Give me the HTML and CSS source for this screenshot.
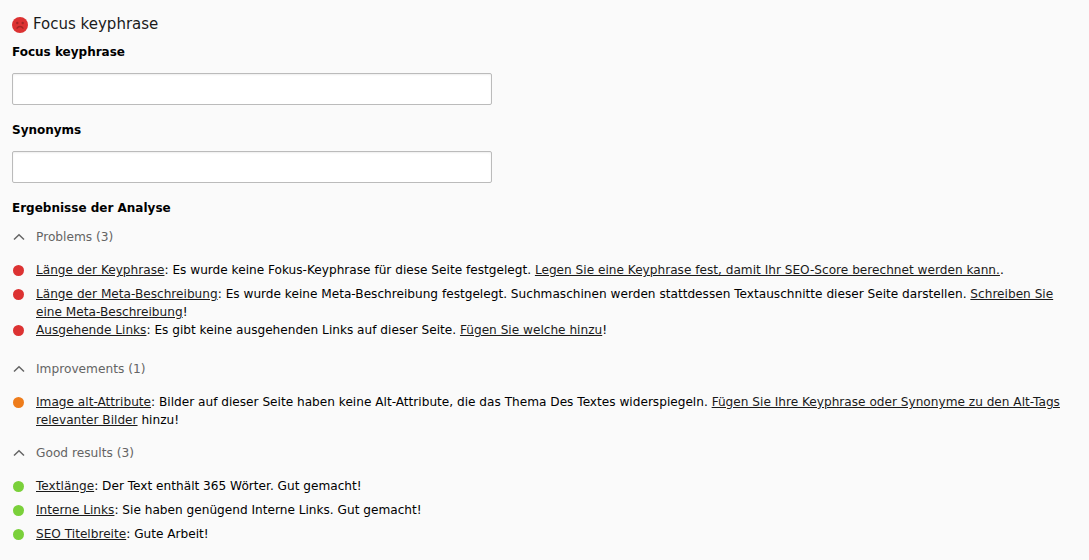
FILE: index.html
```html
<!DOCTYPE html>
<html lang="en">
<head>
  <meta charset="UTF-8">
  <title>Focus keyphrase</title>
  <link rel="stylesheet" href="styles.css">
</head>
<body>

<div class="container">
  <h2 class="title">
    <svg class="smiley" width="16" height="16" viewBox="0 0 16 16">
      <circle cx="8" cy="8" r="8" fill="#dc3232"/>
      <circle cx="5.300" cy="6" r="1.200" fill="#a52525"/>
      <circle cx="10.700" cy="6" r="1.200" fill="#a52525"/>
      <path d="M4.600 11.600c1-1.500 2.100-2.100 3.400-2.100s2.400.6 3.400 2.100" fill="none" stroke="#a52525" stroke-width="1.300"/>
    </svg>
    Focus keyphrase
  </h2>

  <label class="field-label" for="keyphrase">Focus keyphrase</label>
  <input class="field-input" type="text" id="keyphrase">

  <label class="field-label" for="synonyms">Synonyms</label>
  <input class="field-input" type="text" id="synonyms">

  <h3 class="results-title">Ergebnisse der Analyse</h3>

  <div class="section-head">
    <svg class="chevron" width="13" height="8" viewBox="0 0 13 8"><path d="M2 6.500 7 1.800l5 4.700" fill="none" stroke="#646464" stroke-width="1.500"/></svg>
    Problems (3)
  </div>
  <ul class="results">
    <li><span class="dot red"></span><p><a href="#">Länge der Keyphrase</a>: Es wurde keine Fokus-Keyphrase für diese Seite festgelegt. <a href="#">Legen Sie eine Keyphrase fest, damit Ihr SEO-Score berechnet werden kann.</a>.</p></li>
    <li><span class="dot red"></span><p><a href="#">Länge der Meta-Beschreibung</a>: Es wurde keine Meta-Beschreibung festgelegt. Suchmaschinen werden stattdessen Textauschnitte dieser Seite darstellen. <a href="#">Schreiben Sie eine Meta-Beschreibung</a>!</p></li>
    <li><span class="dot red"></span><p><a href="#">Ausgehende Links</a>: Es gibt keine ausgehenden Links auf dieser Seite. <a href="#">Fügen Sie welche hinzu</a>!</p></li>
  </ul>

  <div class="section-head">
    <svg class="chevron" width="13" height="8" viewBox="0 0 13 8"><path d="M2 6.500 7 1.800l5 4.700" fill="none" stroke="#646464" stroke-width="1.500"/></svg>
    Improvements (1)
  </div>
  <ul class="results">
    <li><span class="dot orange"></span><p><a href="#">Image alt-Attribute</a>: Bilder auf dieser Seite haben keine Alt-Attribute, die das Thema Des Textes widerspiegeln. <a href="#">Fügen Sie Ihre Keyphrase oder Synonyme zu den Alt-Tags relevanter Bilder</a> hinzu!</p></li>
  </ul>

  <div class="section-head">
    <svg class="chevron" width="13" height="8" viewBox="0 0 13 8"><path d="M2 6.500 7 1.800l5 4.700" fill="none" stroke="#646464" stroke-width="1.500"/></svg>
    Good results (3)
  </div>
  <ul class="results">
    <li><span class="dot green"></span><p><a href="#">Textlänge</a>: Der Text enthält 365 Wörter. Gut gemacht!</p></li>
    <li><span class="dot green"></span><p><a href="#">Interne Links</a>: Sie haben genügend Interne Links. Gut gemacht!</p></li>
    <li><span class="dot green"></span><p><a href="#">SEO Titelbreite</a>: Gute Arbeit!</p></li>
  </ul>
</div>

</body>
</html>
```

FILE: styles.css
```css
body {
  font-family: "DejaVu Sans", Verdana, sans-serif;
  font-size: 12px;
  line-height: 18px;
  margin: 0;
  background-color: #fafafa;
  color: #000;
}
.container {
  padding: 14px 12px 0;
}
.title {
  display: flex;
  align-items: center;
  gap: 5px;
  margin: 0;
  height: 20px;
  font-size: 15px;
  font-weight: normal;
  color: #1a1a1a;
}
.smiley {
  flex: none;
  margin-top: 2px;
}
.field-label {
  display: block;
  margin-top: 9px;
  font-weight: bold;
  height: 18px;
}
.field-input {
  display: block;
  box-sizing: border-box;
  width: 480px;
  height: 32px;
  margin: 12px 0 16px;
  border: 1px solid #bbb;
  border-radius: 2px;
  background-color: #fff;
  box-shadow: inset 0 1px 2px rgba(0, 0, 0, 0.07);
}
.field-input + .field-label {
  margin-top: 0;
}
.results-title {
  margin: 16px 0 0;
  font-size: 12px;
  line-height: 18px;
}
.section-head {
  display: flex;
  align-items: center;
  gap: 11px;
  height: 24px;
  margin-top: 8px;
  font-size: 12.2px;
  color: #646464;
}
.chevron {
  flex: none;
}
.results {
  list-style: none;
  margin: 0 0 12px;
  padding: 12px 0 0;
}
.results li {
  display: flex;
  min-height: 24px;
}
.results p {
  margin: 0;
  padding-left: 12px;
  font-size: 12.13px;
}
.results a {
  color: #1a1a1a;
  text-decoration: underline;
}
.dot {
  flex: none;
  width: 11px;
  height: 11px;
  margin-top: 4px;
  margin-left: 1px;
  border-radius: 50%;
}
.red { background-color: #dc3232; }
.orange { background-color: #ee7c1b; }
.green { background-color: #7ad03a; }
```
